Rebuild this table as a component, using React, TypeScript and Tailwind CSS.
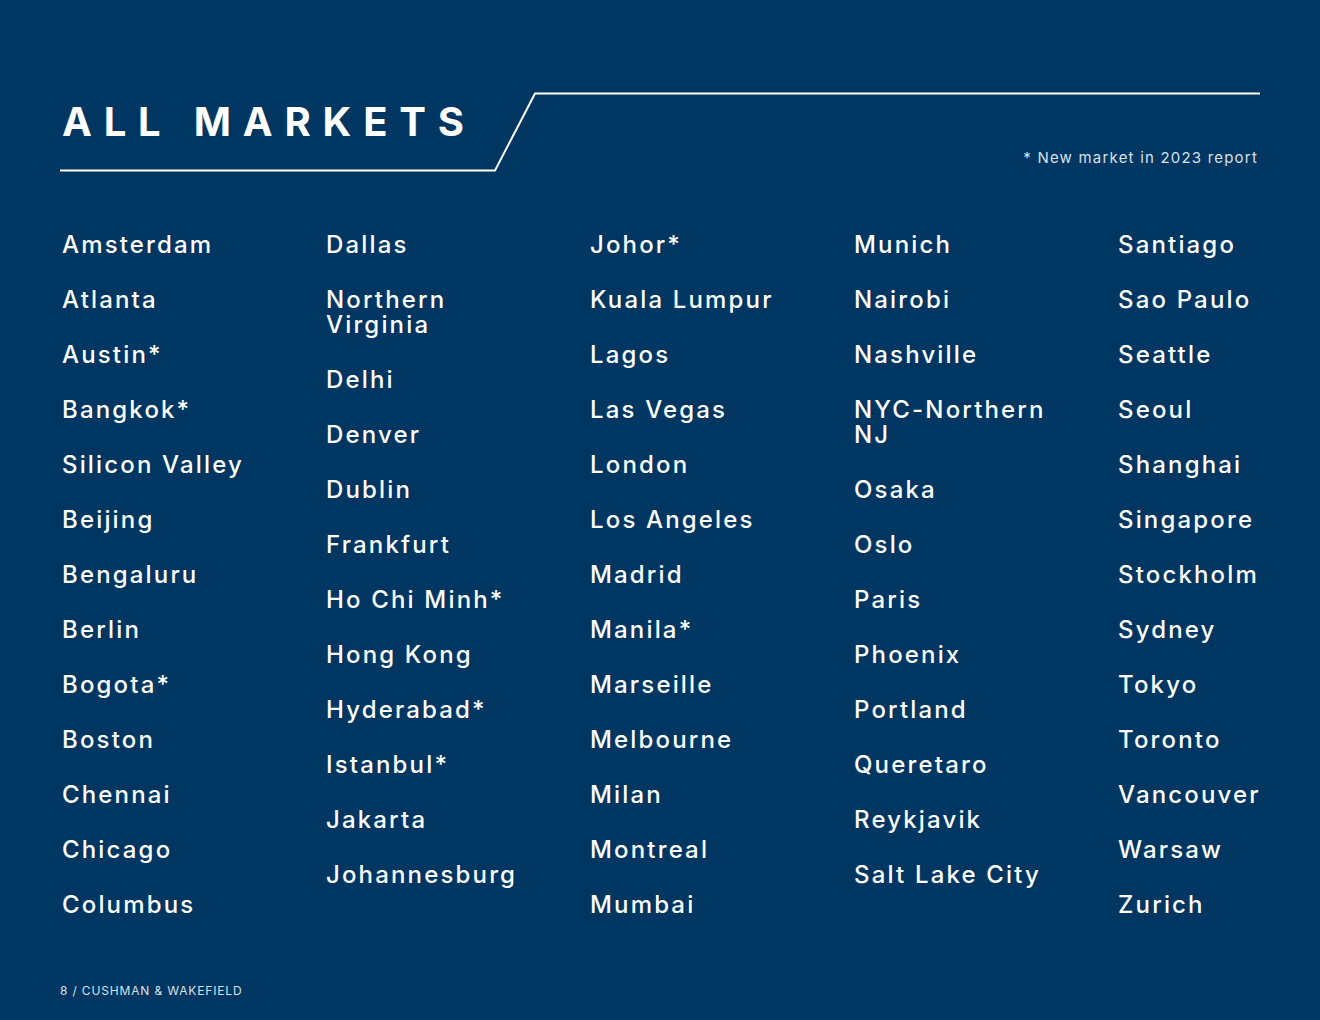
const columns: string[][] = [
  ["Amsterdam", "Atlanta", "Austin*", "Bangkok*", "Silicon Valley", "Beijing", "Bengaluru", "Berlin", "Bogota*", "Boston", "Chennai", "Chicago", "Columbus"],
  ["Dallas", "Northern Virginia", "Delhi", "Denver", "Dublin", "Frankfurt", "Ho Chi Minh*", "Hong Kong", "Hyderabad*", "Istanbul*", "Jakarta", "Johannesburg"],
  ["Johor*", "Kuala Lumpur", "Lagos", "Las Vegas", "London", "Los Angeles", "Madrid", "Manila*", "Marseille", "Melbourne", "Milan", "Montreal", "Mumbai"],
  ["Munich", "Nairobi", "Nashville", "NYC-Northern NJ", "Osaka", "Oslo", "Paris", "Phoenix", "Portland", "Queretaro", "Reykjavik", "Salt Lake City"],
  ["Santiago", "Sao Paulo", "Seattle", "Seoul", "Shanghai", "Singapore", "Stockholm", "Sydney", "Tokyo", "Toronto", "Vancouver", "Warsaw", "Zurich"],
];

export default function App() {
  return (
    <div className="w-[1320px] h-[1020px] bg-[#003662] px-[60px] flex flex-col text-white font-['Inter',sans-serif]">
      {/* Header with angled rule */}
      <div className="relative mt-[92px] h-[80px]">
        <svg className="absolute inset-0" width="1200" height="80" viewBox="0 0 1200 80" fill="none">
          <polyline points="0,78.5 435,78.5 475,1.5 1200,1.5" stroke="#ffffff" strokeWidth="2" />
        </svg>
        <div className="flex items-start justify-between">
          <h1 className="pt-[10px] pl-[2px] text-[40px] leading-[40px] font-bold tracking-[0.295em]">ALL MARKETS</h1>
          <p className="pt-[58px] pr-[2px] text-[15px] leading-[16px] tracking-[0.08em] text-[#d6e0ec]">* New market in 2023 report</p>
        </div>
      </div>

      {/* Market list */}
      <div className="mt-[60px] grid grid-cols-[264px_264px_264px_264px_1fr] pl-[2px]">
        {columns.map((col, i) => (
          <ul key={i} className="flex flex-col gap-[30px]">
            {col.map((name) => (
              <li key={name} className="text-[24px] leading-[25px] font-medium tracking-[0.09em] max-w-[200px]">
                {name}
              </li>
            ))}
          </ul>
        ))}
      </div>

      <div className="mt-auto mb-[23px] text-[12px] leading-[12px] tracking-[0.07em] text-[#d6e0ec]">
        8 / CUSHMAN &amp; WAKEFIELD
      </div>
    </div>
  );
}
